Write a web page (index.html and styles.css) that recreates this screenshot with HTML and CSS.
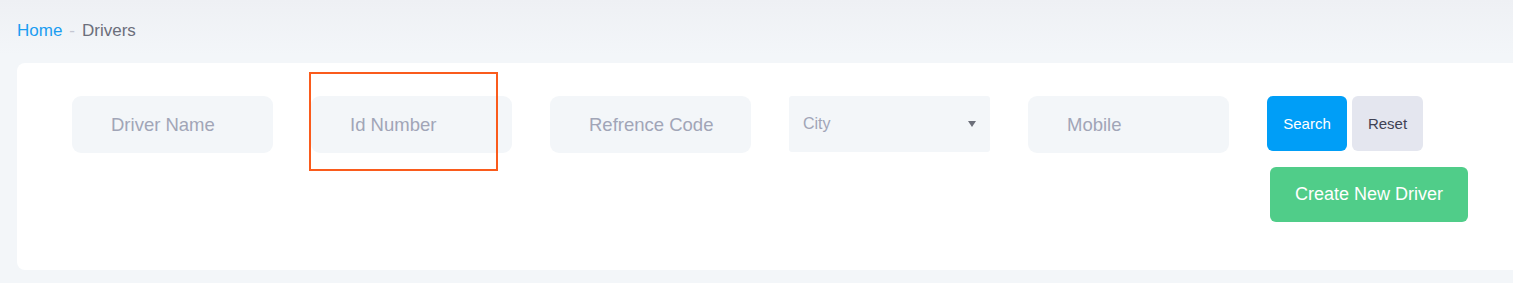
FILE: index.html
```html
<!DOCTYPE html>
<html>
  <head>
    <meta charset="UTF-8" />
    <title>Drivers</title>
    <link rel="stylesheet" href="styles.css">
  </head>
  <body>

    <div class="breadcrumb">
      <a href="#" class="crumb-link">Home</a>
      <span class="crumb-sep">-</span>
      <span class="crumb-current">Drivers</span>
    </div>

    <div class="card">
      <div class="filters">
        <input type="text" class="field" placeholder="Driver Name" />
        <div class="field-wrap">
          <input type="text" class="field" placeholder="Id Number" />
          <div class="highlight"></div>
        </div>
        <input type="text" class="field" placeholder="Refrence Code" />
        <div class="select">
          <span>City</span>
          <span class="caret"></span>
        </div>
        <input type="text" class="field" placeholder="Mobile" />

        <div class="actions">
          <div class="btn-row">
            <button class="btn btn-search">Search</button>
            <button class="btn btn-reset">Reset</button>
          </div>
          <button class="btn btn-create">Create New Driver</button>
        </div>
      </div>
    </div>

  </body>
</html>
```

FILE: styles.css
```css
body {
  font-family: 'Liberation Sans', Arial, sans-serif;
  margin: 0;
  padding: 21px 0 0 17px;
  height: 283px;
  box-sizing: border-box;
  overflow: hidden;
  background: linear-gradient(180deg, #eef0f4 0px, #f3f6f9 55px, #f3f6f9 100%);
}

.breadcrumb {
  font-size: 17px;
  line-height: 20px;
  height: 20px;
  display: flex;
  gap: 7px;
}

.crumb-link {
  color: #1b9df1;
  text-decoration: none;
}

.crumb-sep {
  color: #c4c7d2;
}

.crumb-current {
  color: #6b6e7b;
}

.card {
  margin-top: 22px;
  width: 1540px;
  height: 207px;
  box-sizing: border-box;
  background: #fff;
  border-radius: 8px;
  padding: 33px 0 0 55px;
}

.filters {
  display: flex;
  align-items: flex-start;
  gap: 38px;
}

.field {
  width: 201px;
  height: 57px;
  box-sizing: border-box;
  border: none;
  outline: none;
  border-radius: 9px;
  background: #f3f6f9;
  padding: 0 0 0 39px;
  font-family: inherit;
  font-size: 18.5px;
  color: #3f4254;
}

.field::placeholder {
  color: #a1a5b7;
}

.field-wrap {
  position: relative;
}

.highlight {
  position: absolute;
  left: -2px;
  top: -24px;
  width: 189px;
  height: 99px;
  border: 2px solid #fa5b1c;
  box-sizing: border-box;
}

.select {
  width: 201px;
  height: 56px;
  box-sizing: border-box;
  border-radius: 3px;
  background: #f3f6f9;
  padding: 0 13px 0 14px;
  display: flex;
  align-items: center;
  justify-content: space-between;
  font-size: 16px;
  color: #a1a5b7;
}

.caret {
  width: 0;
  height: 0;
  border-left: 4px solid transparent;
  border-right: 4px solid transparent;
  border-top: 6px solid #6c6f7a;
  margin-right: 1px;
}

.actions {
  display: flex;
  flex-direction: column;
  gap: 16px;
}

.btn-row {
  display: flex;
  gap: 5px;
}

.btn {
  border: none;
  border-radius: 6px;
  font-family: inherit;
  cursor: pointer;
  padding: 0;
}

.btn-search {
  width: 80px;
  height: 55px;
  background: #009ef7;
  color: #fff;
  font-size: 15px;
}

.btn-reset {
  width: 71px;
  height: 55px;
  background: #e4e6ef;
  color: #3f4254;
  font-size: 15px;
}

.btn-create {
  margin-left: 3px;
  width: 198px;
  height: 55px;
  background: #50cd89;
  color: #fff;
  font-size: 18px;
}
```
